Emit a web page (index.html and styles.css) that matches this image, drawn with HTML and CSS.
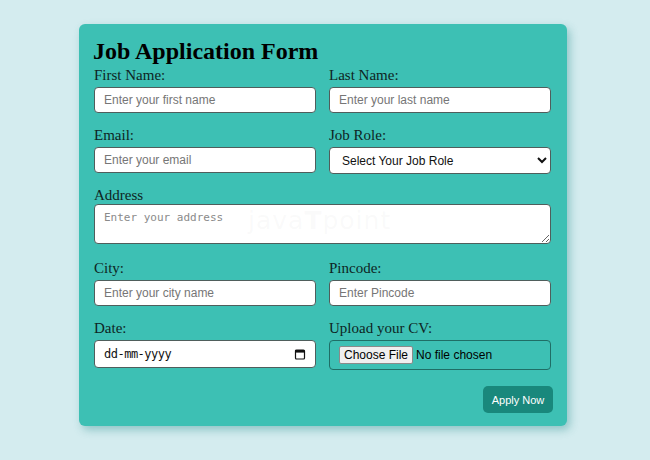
FILE: index.html
```html
<!DOCTYPE html>
<html lang="en">
<head>
<meta charset="utf-8">
<title>Job Application Form</title>
<link rel="stylesheet" href="styles.css">
</head>
<body>
<main class="page">
  <form class="card">
    <h1 class="title">Job Application Form</h1>
    <div class="grid">
      <div class="field">
        <label class="label" for="fn">First Name:</label>
        <input class="input" id="fn" type="text" placeholder="Enter your first name">
      </div>
      <div class="field">
        <label class="label" for="ln">Last Name:</label>
        <input class="input" id="ln" type="text" placeholder="Enter your last name">
      </div>
      <div class="field">
        <label class="label" for="em">Email:</label>
        <input class="input" id="em" type="email" placeholder="Enter your email">
      </div>
      <div class="field">
        <label class="label" for="role">Job Role:</label>
        <select class="input select" id="role">
          <option>Select Your Job Role</option>
        </select>
      </div>
      <div class="field full">
        <label class="label tight" for="addr">Address</label>
        <textarea class="textarea" id="addr" placeholder="Enter your address"></textarea>
        <span class="watermark">java<span class="wm-t">T</span>point</span>
      </div>
      <div class="field">
        <label class="label" for="city">City:</label>
        <input class="input" id="city" type="text" placeholder="Enter your city name">
      </div>
      <div class="field">
        <label class="label" for="pin">Pincode:</label>
        <input class="input" id="pin" type="text" placeholder="Enter Pincode">
      </div>
      <div class="field">
        <label class="label" for="date">Date:</label>
        <div class="input date">
          <span class="date-text">dd-mm-yyyy</span>
          <svg class="cal" width="12" height="12" viewBox="0 0 12 12" aria-hidden="true">
            <rect x="1.5" y="2" width="9" height="9" rx="1" fill="none" stroke="#111" stroke-width="1.2"/>
            <rect x="1.5" y="2" width="9" height="2.6" fill="#111"/>
          </svg>
        </div>
      </div>
      <div class="field">
        <label class="label" for="cv">Upload your CV:</label>
        <div class="filebox">
          <span class="filebtn">Choose File</span>
          <span class="filetext">No file chosen</span>
        </div>
      </div>
    </div>
    <div class="actions">
      <button class="apply" type="button">Apply Now</button>
    </div>
  </form>
</main>
</body>
</html>
```
FILE: styles.css
```css
* { box-sizing: border-box; }
html, body { margin: 0; padding: 0; }
body {
  background: #d4ecef;
  width: 650px;
  height: 460px;
  overflow: hidden;
  font-family: "Liberation Serif", "Times New Roman", serif;
}
.page {
  padding: 24px 0 0 79px;
}
.card {
  width: 488px;
  height: 402px;
  background: #3dc0b4;
  border-radius: 6px;
  padding: 12px 14px 14px 15px;
  box-shadow: 3px 4px 8px rgba(60, 150, 150, 0.45);
}
.title {
  margin: 0 0 0 -1px;
  font-size: 24px;
  line-height: 30px;
  font-weight: bold;
  color: #000;
}
.grid {
  display: grid;
  grid-template-columns: 222px 222px;
  column-gap: 13px;
}
.field {
  display: flex;
  flex-direction: column;
  margin-bottom: 13px;
  position: relative;
}
.full { grid-column: 1 / 3; margin-bottom: 15px; }
.label {
  font-size: 15px;
  line-height: 18px;
  color: #0e2523;
  margin-bottom: 3px;
}
.label.tight { line-height: 17px; margin-bottom: 0; }
.input {
  height: 26px;
  width: 222px;
  border: 1px solid #4f5e5c;
  border-radius: 4px;
  background: #fff;
  padding: 0 9px;
  font-family: "Liberation Sans", Arial, sans-serif;
  font-size: 12px;
  color: #000;
  outline: none;
}
.input::placeholder { color: #767676; }
.select {
  height: 27px;
  padding: 0 5px 0 8px;
  color: #111;
}
.textarea {
  width: 457px;
  height: 40px;
  border: 1px solid #4f5e5c;
  border-radius: 4px;
  background: #fff;
  padding: 6px 9px;
  font-family: "DejaVu Sans Mono", "Liberation Mono", monospace;
  font-size: 11px;
  resize: vertical;
  outline: none;
}
.textarea::placeholder { color: #8a8a8a; }
.watermark {
  position: absolute;
  left: 154px;
  top: 19px;
  font-family: "DejaVu Sans", sans-serif;
  font-size: 25px;
  color: rgba(190, 190, 190, 0.07);
  pointer-events: none;
  letter-spacing: 1px;
}
.wm-t { font-weight: bold; }
.date {
  height: 28px;
  display: flex;
  align-items: center;
  justify-content: space-between;
  padding: 0 9px 0 9px;
}
.date-text {
  font-family: "DejaVu Sans Mono", "Liberation Mono", monospace;
  font-size: 12px;
  color: #111;
  letter-spacing: -0.5px;
}
.cal { display: block; }
.filebox {
  width: 222px;
  height: 30px;
  border: 1px solid #1f6e66;
  border-radius: 4px;
  display: flex;
  align-items: center;
  padding: 0 9px;
  gap: 3px;
  font-family: "Liberation Sans", Arial, sans-serif;
  font-size: 12px;
  color: #000;
}
.filebtn {
  background: #efefef;
  border: 1px solid #8a8a8a;
  border-radius: 2px;
  padding: 1px 4px;
  line-height: 14px;
  font-size: 12px;
  color: #000;
}
.filetext { font-size: 12px; }
.actions {
  display: flex;
  justify-content: flex-end;
  margin-top: 3px;
  margin-right: 0;
}
.apply {
  width: 70px;
  height: 27px;
  background: #19887c;
  color: #fff;
  border: none;
  border-radius: 5px;
  font-family: "Liberation Sans", Arial, sans-serif;
  font-size: 11px;
  padding: 0;
}
```
